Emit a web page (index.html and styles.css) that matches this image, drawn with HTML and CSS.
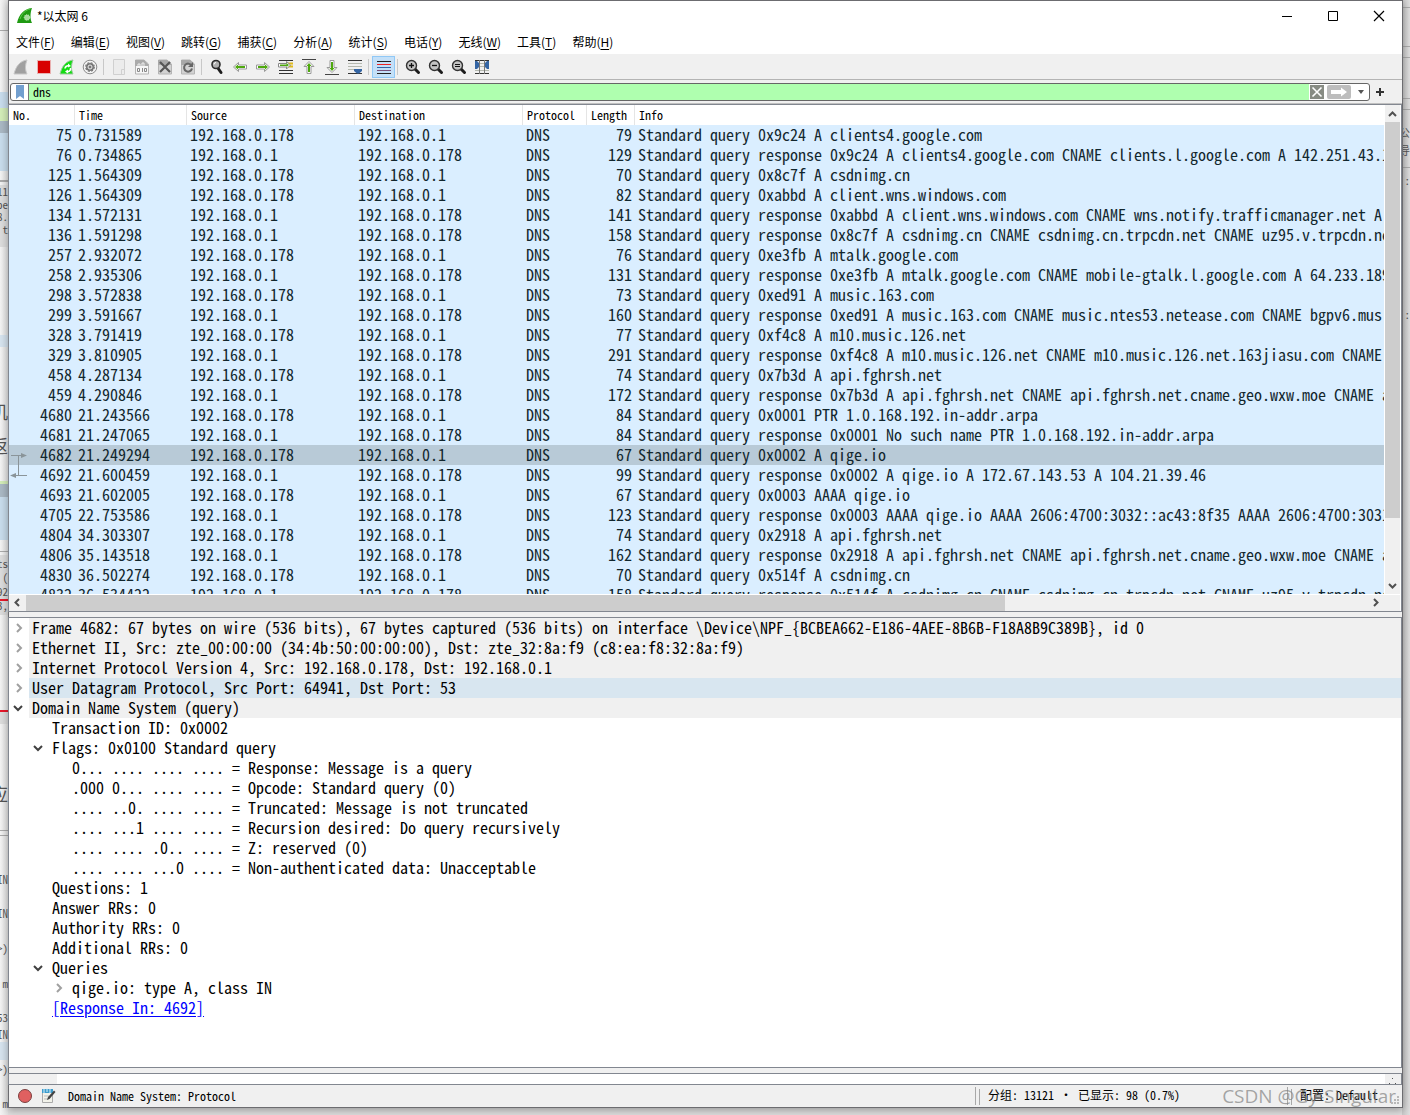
FILE: index.html
```html
<!DOCTYPE html>
<html lang="zh-CN">
<head>
<meta charset="utf-8">
<meta name="viewport" content="width=device-width, initial-scale=1">
<title>*以太网 6</title>
<link rel="stylesheet" href="styles.css">
</head>
<body>
<div class="desktop" aria-hidden="true">
  <div class="strip left">
    <i class="band line" style="top:30px;height:1px"></i>
    <i class="band blue" style="top:92px;height:16px"></i>
    <i class="band green" style="top:108px;height:13px"></i>
    <i class="band slate" style="top:121px;height:12px"></i>
    <i class="band blue" style="top:133px;height:38px"></i>
    <i class="band line" style="top:180px;height:2px"></i>
    <i class="band gray" style="top:185px;height:62px"></i>
    <span style="top:184px">11</span><span style="top:197px">be</span><span style="top:209px">8.</span><span style="top:222px">t</span>
    <i class="band pale" style="top:335px;height:12px"></i>
    <span class="big" style="top:399px">机</span><span class="big" style="top:433px">返</span>
    <i class="band green" style="top:481px;height:3px"></i>
    <i class="band slate" style="top:484px;height:13px"></i>
    <i class="band blue" style="top:497px;height:43px"></i>
    <i class="band line" style="top:551px;height:1px"></i>
    <i class="band gray" style="top:555px;height:60px"></i>
    <span style="top:556px">ts</span><span style="top:570px">(</span><span style="top:584px">92</span><span style="top:598px">3,</span>
    <i class="band red" style="top:599px;height:2px"></i>
    <i class="band red" style="top:710px;height:2px"></i>
    <i class="band gray" style="top:712px;height:12px"></i>
    <span class="big" style="top:781px">应</span>
    <i class="band line" style="top:830px;height:1px"></i>
    <i class="band line" style="top:835px;height:1px"></i>
    <span style="top:872px">IN</span><span style="top:906px">IN</span><span style="top:941px">&gt;)</span><span style="top:976px">m</span><span style="top:1010px">53</span><span style="top:1027px">IN</span>
    <i class="band pale" style="top:1042px;height:18px"></i>
    <span style="top:1062px">&gt;)</span><span style="top:1096px">m</span>
  </div>
  <div class="strip right">
    <i class="band line" style="top:7px;height:1px"></i>
    <i class="band line" style="top:46px;height:1px"></i>
    <i class="band line" style="top:57px;height:1px"></i>
    <i class="band line" style="top:98px;height:1px"></i>
    <i class="band line" style="top:109px;height:1px"></i>
    <i class="band line" style="top:167px;height:1px"></i>
    <span style="top:125px">公</span><span style="top:143px">导</span>
    <span style="top:173px">:</span><span style="top:307px">:</span>
  </div>
</div>

<main class="window">
  <header class="titlebar">
    <svg class="logo" viewBox="0 0 16 16" width="16" height="16"><path d="M0 15C2 6 7 1 15 0C13 5 13 11 15 15Z" fill="#1f9a12"/><path d="M3 11C5 5 9 2 13 1" stroke="#5cc84e" fill="none"/><circle cx="10" cy="9.500" r="2.800" fill="#a6dc9e" stroke="#c7efc1" stroke-dasharray="1 1"/></svg>
    <h1>*以太网 6</h1>
    <div class="caption-buttons">
      <button aria-label="最小化"><svg width="12" height="12"><path d="M1 6.500H11" stroke="#000"/></svg></button>
      <button aria-label="最大化"><svg width="12" height="12"><path d="M1.500 1.500H10.500V10.500H1.500Z" stroke="#000" fill="none"/></svg></button>
      <button aria-label="关闭"><svg width="12" height="12"><path d="M1 1L11 11M11 1L1 11" stroke="#000" stroke-width="1.200"/></svg></button>
    </div>
  </header>

  <nav class="menubar">
    <button>文件(<u>F</u>)</button><button>编辑(<u>E</u>)</button><button>视图(<u>V</u>)</button><button>跳转(<u>G</u>)</button><button>捕获(<u>C</u>)</button><button>分析(<u>A</u>)</button><button>统计(<u>S</u>)</button><button>电话(<u>Y</u>)</button><button>无线(<u>W</u>)</button><button>工具(<u>T</u>)</button><button>帮助(<u>H</u>)</button>
  </nav>

  <div class="toolbar" role="toolbar">
    <button aria-label="开始捕获"><svg width="16" height="16"><path d="M1 15C3 7 7 2 14 1C12 6 12 11 14 15Z" fill="#a0a0a0" stroke="#c8c8c8"/></svg></button>
    <button aria-label="停止捕获"><svg width="16" height="16"><path d="M1.500 1.500H14.500V14.500H1.500Z" fill="#d80000" stroke="#e9b0b0"/></svg></button>
    <button aria-label="重新开始捕获"><svg width="16" height="16"><path d="M1 15C3 7 7 2 14 1C12 6 12 11 14 15Z" fill="#12dc12" stroke="#9dc89d"/><path d="M6 9.500A3 3 0 0 1 10 7M11.500 9A3 3 0 0 1 7.500 12.500" stroke="#fff" stroke-width="1.600" fill="none"/><path d="M9 4.500L12 7L9 8.500ZM9 10.500L6 12.500L9 14.500Z" fill="#fff"/></svg></button>
    <button aria-label="捕获选项"><svg width="16" height="16"><circle cx="8" cy="8" r="6.800" fill="#f4f4f4" stroke="#8a8a8a"/><circle cx="8" cy="8" r="4" fill="#777"/><circle cx="8" cy="8" r="4.300" fill="none" stroke="#777" stroke-width="1.200" stroke-dasharray="2 1.400"/><circle cx="8" cy="8" r="2" fill="#777" stroke="#eee"/></svg></button>
    <span class="sep"></span>
    <button aria-label="打开"><svg width="16" height="16"><path d="M2.500.5H13.500V15.500H2.500ZM10.500 15V10.500H13" fill="#ececec" stroke="#d0d0d0"/></svg></button>
    <button aria-label="保存"><svg width="16" height="16"><path d="M1.500 1H10L14.500 5V15H1.500Z" fill="#f6f6f6" stroke="#b4b4b4"/><path d="M1 1H10L14 5V7H1Z" fill="#aaa"/><path d="M4 7V5H6V7M8 7V4H10V7" stroke="#eee" fill="none"/><path d="M3.500 9.500H5.500V12.500H3.500ZM8.500 9V13M10.500 9.500H12.500V12.500H10.500Z" stroke="#888" fill="none"/></svg></button>
    <button aria-label="关闭文件"><svg width="16" height="16"><path d="M1.500 1H10L14.500 5V15H1.500Z" fill="#d2d2d2" stroke="#b4b4b4"/><path d="M1 1H10L14 5V6H1Z" fill="#a8a8a8"/><path d="M3 3L13 13M13 3L3 13" stroke="#555" stroke-width="2.200"/></svg></button>
    <button aria-label="重新加载"><svg width="16" height="16"><path d="M1.500 1H10L14.500 5V15H1.500Z" fill="#d2d2d2" stroke="#b4b4b4"/><path d="M1 1H10L14 5V6H1Z" fill="#a8a8a8"/><path d="M11.500 6.500A4 4 0 1 0 12 9.500" stroke="#666" stroke-width="2" fill="none"/><path d="M13 3V8H8Z" fill="#666"/></svg></button>
    <span class="sep"></span>
    <button aria-label="查找分组"><svg width="16" height="16"><path d="M8.500 8.500L12 13.500" stroke="#1c1c1c" stroke-width="3" stroke-linecap="round"/><circle cx="7" cy="5.500" r="4" fill="#b0b0b0" stroke="#2b2b2b" stroke-width="1.600"/><path d="M5 5.500A2 2 0 0 1 7 3.500" stroke="#fff" fill="none"/></svg></button>
    <button aria-label="上一个分组"><svg width="16" height="16"><path d="M1.500 8L6.500 3.500V6H14.500V10H6.500V12.500Z" fill="#fff" stroke="#999"/><path d="M3 8L6 5.500V7H13V9H6V10.500Z" fill="#4ea80e"/></svg></button>
    <button aria-label="下一个分组"><svg width="16" height="16"><path d="M14.500 8L9.500 3.500V6H1.500V10H9.500V12.500Z" fill="#fff" stroke="#999"/><path d="M13 8L10 5.500V7H3V9H10V10.500Z" fill="#4ea80e"/></svg></button>
    <button aria-label="转到分组"><svg width="16" height="16"><path d="M1 1.500H15M1 11.500H15M1 14.500H15" stroke="#333"/><path d="M10 4.500H15M10 7.500H15" stroke="#e0b91b" stroke-width="2"/><path d="M12.500 6L8.500 2.500V4.500H.5V8H8.500V10Z" fill="#fff" stroke="#888"/><path d="M11 6L8.500 4V5.500H2V7H8.500V8Z" fill="#4ea80e"/></svg></button>
    <button aria-label="首个分组"><svg width="16" height="16"><path d="M1 .5H15" stroke="#444"/><path d="M8 2.500L13 7.500H10V14.500H6V7.500H3Z" fill="#fff" stroke="#999"/><path d="M8 4L10.500 7H9V13H7V7H5.500Z" fill="#4ea80e"/></svg></button>
    <button aria-label="最新分组"><svg width="16" height="16"><path d="M1 15.500H15" stroke="#444"/><path d="M8 13.500L13 8.500H10V1.500H6V8.500H3Z" fill="#fff" stroke="#999"/><path d="M8 12L10.500 9H9V3H7V9H5.500Z" fill="#4ea80e"/></svg></button>
    <button aria-label="自动滚动"><svg width="16" height="16"><path d="M1 1.500H15M1 14.500H15" stroke="#333"/><path d="M1 4.500H15M1 7.500H15M1 10.500H7" stroke="#b4b8ae"/><path d="M7 10H15V12L12 14.500H10L7 12Z" fill="#3465a4"/></svg></button>
    <span class="sep"></span>
    <button class="checked" aria-pressed="true" aria-label="着色分组"><svg width="16" height="16"><path d="M1 2.500H15M1 14.500H15" stroke="#222"/><path d="M1 5.500H15" stroke="#e22"/><path d="M1 8.500H15" stroke="#3465a4"/><path d="M1 11.500H15" stroke="#75507b"/></svg></button>
    <span class="sep"></span>
    <button aria-label="放大"><svg width="16" height="16"><path d="M10 10L13.500 13.500" stroke="#1c1c1c" stroke-width="3" stroke-linecap="round"/><circle cx="6.500" cy="6.500" r="5" fill="#c4c4c4" stroke="#333" stroke-width="1.400"/><path d="M4 6.500H9M6.500 4V9" stroke="#111" stroke-width="1.300"/></svg></button>
    <button aria-label="缩小"><svg width="16" height="16"><path d="M10 10L13.500 13.500" stroke="#1c1c1c" stroke-width="3" stroke-linecap="round"/><circle cx="6.500" cy="6.500" r="5" fill="#c4c4c4" stroke="#333" stroke-width="1.400"/><path d="M4 6.500H9" stroke="#111" stroke-width="1.300"/></svg></button>
    <button aria-label="正常大小"><svg width="16" height="16"><path d="M10 10L13.500 13.500" stroke="#1c1c1c" stroke-width="3" stroke-linecap="round"/><circle cx="6.500" cy="6.500" r="5" fill="#c4c4c4" stroke="#333" stroke-width="1.400"/><path d="M4 5.500H9M4 7.500H9" stroke="#111"/></svg></button>
    <button aria-label="调整列宽"><svg width="16" height="16"><path d="M1 1.500H15M1 14.500H15" stroke="#333"/><path d="M1 4.500H15M1 7.500H15M1 11.500H15" stroke="#b4b8ae"/><path d="M5.500 1V15M10.500 1V15" stroke="#777"/><path d="M1 2H3L5 4V8L3 10H1ZM15 2H13L11 4V8L13 10H15Z" fill="#3465a4"/></svg></button>
  </div>

  <form class="filterbar" onsubmit="return false">
    <div class="filter">
      <button type="button" class="bookmark" aria-label="书签"><svg width="10" height="14"><path d="M1 0H9V14L5 11L1 14Z" fill="#729fcf"/></svg></button>
      <input type="text" value="dns" aria-label="显示过滤器" spellcheck="false">
      <button type="button" class="clear" aria-label="清除"><svg width="14" height="14"><path d="M2.500 2.500L11.500 11.500M11.500 2.500L2.500 11.500" stroke="#fff" stroke-width="1.600"/></svg></button>
      <button type="submit" class="apply" aria-label="应用"><svg width="24" height="14"><path d="M4 5H14V2.500L20 7L14 11.500V9H4Z" fill="#fff"/></svg></button>
      <button type="button" class="drop" aria-label="历史"><svg width="6" height="4"><path d="M0 0H6L3 4Z" fill="#555"/></svg></button>
    </div>
    <button type="button" class="add" aria-label="添加"><svg width="8" height="8"><path d="M0 4H8M4 0V8" stroke="#333" stroke-width="2"/></svg></button>
  </form>

  <section class="pane packets" aria-label="分组列表">
    <div class="list">
      <table>
        <colgroup><col class="c-no"><col class="c-time"><col class="c-addr"><col class="c-addr"><col class="c-proto"><col class="c-len"><col></colgroup>
        <thead><tr><th>No.</th><th>Time</th><th>Source</th><th>Destination</th><th>Protocol</th><th>Length</th><th>Info</th></tr></thead>
        <tbody>
          <tr><td>75</td><td>0.731589</td><td>192.168.0.178</td><td>192.168.0.1</td><td>DNS</td><td>79</td><td>Standard query 0x9c24 A clients4.google.com</td></tr>
          <tr><td>76</td><td>0.734865</td><td>192.168.0.1</td><td>192.168.0.178</td><td>DNS</td><td>129</td><td>Standard query response 0x9c24 A clients4.google.com CNAME clients.l.google.com A 142.251.43.14</td></tr>
          <tr><td>125</td><td>1.564309</td><td>192.168.0.178</td><td>192.168.0.1</td><td>DNS</td><td>70</td><td>Standard query 0x8c7f A csdnimg.cn</td></tr>
          <tr><td>126</td><td>1.564309</td><td>192.168.0.178</td><td>192.168.0.1</td><td>DNS</td><td>82</td><td>Standard query 0xabbd A client.wns.windows.com</td></tr>
          <tr><td>134</td><td>1.572131</td><td>192.168.0.1</td><td>192.168.0.178</td><td>DNS</td><td>141</td><td>Standard query response 0xabbd A client.wns.windows.com CNAME wns.notify.trafficmanager.net A</td></tr>
          <tr><td>136</td><td>1.591298</td><td>192.168.0.1</td><td>192.168.0.178</td><td>DNS</td><td>158</td><td>Standard query response 0x8c7f A csdnimg.cn CNAME csdnimg.cn.trpcdn.net CNAME uz95.v.trpcdn.net</td></tr>
          <tr><td>257</td><td>2.932072</td><td>192.168.0.178</td><td>192.168.0.1</td><td>DNS</td><td>76</td><td>Standard query 0xe3fb A mtalk.google.com</td></tr>
          <tr><td>258</td><td>2.935306</td><td>192.168.0.1</td><td>192.168.0.178</td><td>DNS</td><td>131</td><td>Standard query response 0xe3fb A mtalk.google.com CNAME mobile-gtalk.l.google.com A 64.233.189.188</td></tr>
          <tr><td>298</td><td>3.572838</td><td>192.168.0.178</td><td>192.168.0.1</td><td>DNS</td><td>73</td><td>Standard query 0xed91 A music.163.com</td></tr>
          <tr><td>299</td><td>3.591667</td><td>192.168.0.1</td><td>192.168.0.178</td><td>DNS</td><td>160</td><td>Standard query response 0xed91 A music.163.com CNAME music.ntes53.netease.com CNAME bgpv6.music</td></tr>
          <tr><td>328</td><td>3.791419</td><td>192.168.0.178</td><td>192.168.0.1</td><td>DNS</td><td>77</td><td>Standard query 0xf4c8 A m10.music.126.net</td></tr>
          <tr><td>329</td><td>3.810905</td><td>192.168.0.1</td><td>192.168.0.178</td><td>DNS</td><td>291</td><td>Standard query response 0xf4c8 A m10.music.126.net CNAME m10.music.126.net.163jiasu.com CNAME</td></tr>
          <tr><td>458</td><td>4.287134</td><td>192.168.0.178</td><td>192.168.0.1</td><td>DNS</td><td>74</td><td>Standard query 0x7b3d A api.fghrsh.net</td></tr>
          <tr><td>459</td><td>4.290846</td><td>192.168.0.1</td><td>192.168.0.178</td><td>DNS</td><td>172</td><td>Standard query response 0x7b3d A api.fghrsh.net CNAME api.fghrsh.net.cname.geo.wxw.moe CNAME a</td></tr>
          <tr><td>4680</td><td>21.243566</td><td>192.168.0.178</td><td>192.168.0.1</td><td>DNS</td><td>84</td><td>Standard query 0x0001 PTR 1.0.168.192.in-addr.arpa</td></tr>
          <tr><td>4681</td><td>21.247065</td><td>192.168.0.1</td><td>192.168.0.178</td><td>DNS</td><td>84</td><td>Standard query response 0x0001 No such name PTR 1.0.168.192.in-addr.arpa</td></tr>
          <tr class="selected"><td><svg class="relation" width="18" height="26"><path d="M2 5.500H13M9.500 5V25M5 25.500H18" stroke="#8a9499" fill="none"/><path d="M12 3L18 5.500L12 8ZM7 23L1 25.500L7 28Z" fill="#8a9499"/></svg>4682</td><td>21.249294</td><td>192.168.0.178</td><td>192.168.0.1</td><td>DNS</td><td>67</td><td>Standard query 0x0002 A qige.io</td></tr>
          <tr><td>4692</td><td>21.600459</td><td>192.168.0.1</td><td>192.168.0.178</td><td>DNS</td><td>99</td><td>Standard query response 0x0002 A qige.io A 172.67.143.53 A 104.21.39.46</td></tr>
          <tr><td>4693</td><td>21.602005</td><td>192.168.0.178</td><td>192.168.0.1</td><td>DNS</td><td>67</td><td>Standard query 0x0003 AAAA qige.io</td></tr>
          <tr><td>4705</td><td>22.753586</td><td>192.168.0.1</td><td>192.168.0.178</td><td>DNS</td><td>123</td><td>Standard query response 0x0003 AAAA qige.io AAAA 2606:4700:3032::ac43:8f35 AAAA 2606:4700:3031</td></tr>
          <tr><td>4804</td><td>34.303307</td><td>192.168.0.178</td><td>192.168.0.1</td><td>DNS</td><td>74</td><td>Standard query 0x2918 A api.fghrsh.net</td></tr>
          <tr><td>4806</td><td>35.143518</td><td>192.168.0.1</td><td>192.168.0.178</td><td>DNS</td><td>162</td><td>Standard query response 0x2918 A api.fghrsh.net CNAME api.fghrsh.net.cname.geo.wxw.moe CNAME a</td></tr>
          <tr><td>4830</td><td>36.502274</td><td>192.168.0.178</td><td>192.168.0.1</td><td>DNS</td><td>70</td><td>Standard query 0x514f A csdnimg.cn</td></tr>
          <tr><td>4832</td><td>36.534422</td><td>192.168.0.1</td><td>192.168.0.178</td><td>DNS</td><td>158</td><td>Standard query response 0x514f A csdnimg.cn CNAME csdnimg.cn.trpcdn.net CNAME uz95.v.trpcdn.net</td></tr>
        </tbody>
      </table>
    </div>
    <div class="vscroll" aria-hidden="true">
      <svg width="15" height="17"><path d="M4 11L7.500 7.500L11 11" class="arrow"/></svg>
      <div class="track"><div class="thumb"></div></div>
      <svg width="15" height="17"><path d="M4 7L7.500 10.500L11 7" class="arrow"/></svg>
    </div>
    <div class="hscroll" aria-hidden="true">
      <svg width="17" height="16"><path d="M10 4L6.500 7.500L10 11" class="arrow"/></svg>
      <div class="track"><div class="thumb"></div></div>
      <svg width="17" height="16"><path d="M7 4L10.500 7.500L7 11" class="arrow"/></svg>
    </div>
  </section>

  <section class="pane details" aria-label="分组详情">
    <ul class="tree">
      <li><div class="row proto"><svg class="chev"><path d="M8 6L12 10L8 14"/></svg><span>Frame 4682: 67 bytes on wire (536 bits), 67 bytes captured (536 bits) on interface \Device\NPF_{BCBEA662-E186-4AEE-8B6B-F18A8B9C389B}, id 0</span></div></li>
      <li><div class="row proto"><svg class="chev"><path d="M8 6L12 10L8 14"/></svg><span>Ethernet II, Src: zte_00:00:00 (34:4b:50:00:00:00), Dst: zte_32:8a:f9 (c8:ea:f8:32:8a:f9)</span></div></li>
      <li><div class="row proto"><svg class="chev"><path d="M8 6L12 10L8 14"/></svg><span>Internet Protocol Version 4, Src: 192.168.0.178, Dst: 192.168.0.1</span></div></li>
      <li><div class="row proto hover"><svg class="chev"><path d="M8 6L12 10L8 14"/></svg><span>User Datagram Protocol, Src Port: 64941, Dst Port: 53</span></div></li>
      <li><div class="row proto"><svg class="chev open"><path d="M5 8L9 12L13 8"/></svg><span>Domain Name System (query)</span></div>
        <ul>
          <li><div class="row"><span>Transaction ID: 0x0002</span></div></li>
          <li><div class="row"><svg class="chev open"><path d="M5 8L9 12L13 8"/></svg><span>Flags: 0x0100 Standard query</span></div>
            <ul>
              <li><div class="row"><span>0... .... .... .... = Response: Message is a query</span></div></li>
              <li><div class="row"><span>.000 0... .... .... = Opcode: Standard query (0)</span></div></li>
              <li><div class="row"><span>.... ..0. .... .... = Truncated: Message is not truncated</span></div></li>
              <li><div class="row"><span>.... ...1 .... .... = Recursion desired: Do query recursively</span></div></li>
              <li><div class="row"><span>.... .... .0.. .... = Z: reserved (0)</span></div></li>
              <li><div class="row"><span>.... .... ...0 .... = Non-authenticated data: Unacceptable</span></div></li>
            </ul></li>
          <li><div class="row"><span>Questions: 1</span></div></li>
          <li><div class="row"><span>Answer RRs: 0</span></div></li>
          <li><div class="row"><span>Authority RRs: 0</span></div></li>
          <li><div class="row"><span>Additional RRs: 0</span></div></li>
          <li><div class="row"><svg class="chev open"><path d="M5 8L9 12L13 8"/></svg><span>Queries</span></div>
            <ul>
              <li><div class="row"><svg class="chev"><path d="M8 6L12 10L8 14"/></svg><span>qige.io: type A, class IN</span></div></li>
            </ul></li>
          <li><div class="row"><span><a href="#4692">[Response In: 4692]</a></span></div></li>
        </ul></li>
    </ul>
  </section>

  <section class="pane bytes" aria-label="分组字节"><div class="offset"></div><div class="grip"><svg width="16" height="10"><path d="M7 4H8V5H7ZM4 9H5V10H4ZM10 9H11V10H10Z" fill="#555"/></svg></div></section>

  <footer class="statusbar">
    <svg width="16" height="16"><circle cx="8" cy="8" r="6.500" fill="#e06060" stroke="#7b4040"/></svg>
    <svg class="note" width="16" height="16"><path d="M2.500 2.500H12.500V14.500H2.500Z" fill="#f2f2ea" stroke="#aaa"/><path d="M2 1H13V5H2Z" fill="#3d9ccc"/><path d="M4 1V5M7 0V4M10 1V5" stroke="#d9f0fb"/><path d="M4 8H9M4 11H8" stroke="#bbb"/><path d="M7 12L8 9L14 2.500L15.500 4L9.500 11Z" fill="#444"/></svg>
    <span class="field">Domain Name System: Protocol</span>
    <span class="stat counts">分组: 13121 · 已显示: 98 (0.7%)</span>
    <span class="stat profile">配置: Default</span>
    <span class="watermark">CSDN @Gy-Singular</span>
    <svg class="sizegrip" width="9" height="9"><path d="M6 0H8V2H6ZM6 3H8V5H6ZM3 3H5V5H3ZM0 6H2V8H0ZM3 6H5V8H3ZM6 6H8V8H6Z" fill="#b8b8b8"/></svg>
  </footer>
</main>
</body>
</html>
```
FILE: styles.css
```css
* { box-sizing: border-box; }

:root {
  --ui: "Noto Sans CJK SC", sans-serif;
  --mono: "Noto Sans Mono CJK SC", "Liberation Mono", "Noto Sans CJK SC", monospace;
  --edge: #828790;
  --face: #f0f0f0;
}

body {
  margin: 0;
  padding: 0 7px 7px 8px;
  min-height: 100vh;
  background: #dedede;
  font: 12px/16px var(--ui);
  color: #000;
}

button {
  border: 0;
  margin: 0;
  padding: 0;
  background: none;
  font: inherit;
  color: inherit;
  display: flex;
  align-items: center;
  justify-content: center;
}

svg { display: block; flex: none; }

/* other windows showing at the screen edges */
.desktop { position: absolute; inset: 0; overflow: hidden; }
.strip { position: absolute; top: 0; bottom: 0; overflow: hidden; width: 8px; font: 11px/14px var(--mono); color: #555; }
.left { left: 0; background: linear-gradient(90deg, #f4f4f4, #e2e2e2); }
.right { right: 0; background: linear-gradient(90deg, #c8c8c8, #dedede); }
.strip span { position: absolute; right: 0; white-space: nowrap; }
.strip .big { font-size: 18px; line-height: 24px; }
.band { position: absolute; left: 0; right: 0; }
.line { background: #aaa; }
.blue { background: #c8dcec; }
.pale { background: #d6e3ee; }
.green { background: #d3ecb8; }
.slate { background: #aab8c4; }
.gray { background: #dcdcdc; }
.red { background: #e8182a; }

.window {
  position: relative;
  display: flex;
  flex-direction: column;
  height: calc(100vh - 7px);
  border: 1px solid #6c6c70;
  background: var(--face);
  box-shadow: 0 2px 8px #00000055;
}

.titlebar { display: flex; align-items: center; height: 29px; padding-left: 8px; background: #fff; }
.titlebar h1 { margin: 0 0 0 4px; font: inherit; flex: 1; }
.caption-buttons { display: flex; }
.caption-buttons button { width: 46px; height: 28px; }

.menubar { display: flex; gap: 16px; height: 24px; padding-left: 7px; background: #fff; white-space: nowrap; }
.menubar u { text-underline-offset: 2px; }

.toolbar { display: flex; align-items: flex-start; height: 26px; padding-top: 2px; border-bottom: 1px solid #b4b4b4; }
.toolbar button { width: 23px; height: 22px; padding-left: 4px; justify-content: flex-start; }
.toolbar .checked { padding-left: 3px; background: #c4e0f8; border: 1px solid #90c8f6; }
.sep { width: 4px; height: 16px; margin: 3px 0 0 2px; border-left: 1px solid #c8c8c8; }

.filterbar { display: flex; align-items: center; height: 24px; padding: 0 18px 0 1px; gap: 6px; border-bottom: 1px solid #c0c0c0; }
.filter { flex: 1; display: flex; align-items: center; height: 18px; border: 1px solid #666; border-radius: 3px; background: #fff; }
.bookmark { width: 18px; height: 16px; border-right: 1px solid #777; }
.filter input { flex: 1; min-width: 0; height: 16px; border: 0; outline: 0; padding: 0 4px; background: #afffaf; font: 12px/16px var(--mono); }
.clear { width: 14px; height: 14px; margin: 0 1px; background: #888c84; }
.apply { width: 24px; height: 14px; margin: 0 2px; border-radius: 2px; background: #bdbdbd; }
.drop { width: 16px; height: 14px; }

.pane { border: 1px solid var(--edge); background: #fff; min-height: 0; }

.packets { flex: 508 1 0; display: grid; grid-template: minmax(0, 1fr) 16px / minmax(0, 1fr) 15px; column-gap: 1px; margin-left: -1px; padding-right: 1px; row-gap: 1px; }
.list { overflow: hidden; background: #daeeff; }
table { width: 100%; table-layout: fixed; border-collapse: collapse; }
.c-no { width: 66px; }
.c-time { width: 112px; }
.c-addr { width: 168px; }
.c-proto { width: 64px; }
.c-len { width: 48px; }
th, td { height: 20px; text-align: left; vertical-align: top; white-space: nowrap; }
th { padding: 0 0 0 4px; background: #fff; font: 12px/20px var(--mono); box-shadow: inset -1px 0 #e5e5e5; }
td { position: relative; padding: 0 3px; font: 16px/18px var(--mono); color: #12272e; }
td:nth-child(1), td:nth-child(6) { text-align: right; }
th:last-child { box-shadow: none; }
.selected { background: #b8cad7; }
.relation { position: absolute; left: 0; top: 5px; overflow: visible; }

.vscroll { display: flex; flex-direction: column; background: var(--face); }
.vscroll .track { flex: 1; }
.vscroll .thumb { height: 87%; background: #cdcdcd; }
.hscroll { display: flex; background: var(--face); box-shadow: 16px 0 var(--face); }
.hscroll .track { flex: 1; }
.hscroll .thumb { width: 73%; height: 100%; background: #cdcdcd; }
.arrow { fill: none; stroke: #505050; stroke-width: 2; }

.details { flex: 451 1 0; margin: 5px 0 5px -1px; overflow: hidden; }
.tree, .tree ul { list-style: none; margin: 0; padding: 0; }
.tree ul { padding-left: 20px; }
.row { display: flex; height: 20px; padding-left: 20px; font: 16px/18px var(--mono); white-space: nowrap; }
.row span { flex: 1; padding-left: 3px; }
.proto span { background: var(--face); }
.hover span { background: #d8e6f0; }
.chev { width: 20px; height: 20px; margin-left: -20px; fill: none; stroke: #a0a0a0; stroke-width: 2; }
.open { stroke: #404040; }
.row a { color: #00f; text-underline-offset: 2px; }

.bytes { flex: none; display: flex; justify-content: space-between; height: 12px; margin-left: -1px; overflow: hidden; }
.offset { width: 48px; background: var(--face); }
.grip { width: 16px; background: var(--face); }

.statusbar { position: relative; display: flex; align-items: center; height: 22px; padding: 0 24px 0 8px; font: 12px/16px var(--mono); white-space: nowrap; }
.note { margin-left: 7px; }
.field { flex: 1; padding-left: 12px; }
.stat { padding-left: 8px; border-left: 1px solid #a8a8a8; }
.stat::before { content: ""; display: inline-block; height: 16px; margin: 0 8px 0 -5px; border-left: 1px solid #a8a8a8; vertical-align: middle; }
.counts { width: 312px; }
.watermark { position: absolute; right: 6px; top: 0; font: 19px/22px "Open Sans", sans-serif; color: #808080b0; }
.sizegrip { position: absolute; right: 2px; bottom: 2px; }
```
